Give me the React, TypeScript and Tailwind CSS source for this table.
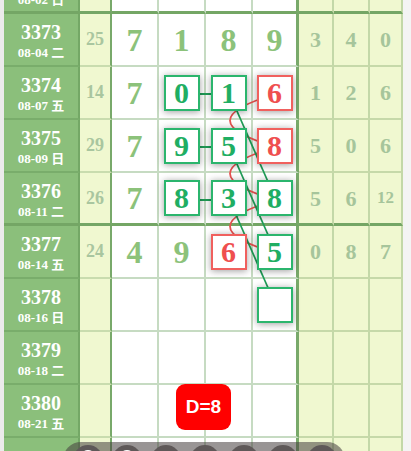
import React from 'react';

type Cell = { v: string; box?: 'g' | 'r' };
type Row = { id: string; date: string; n: string; main: Cell[]; tail: string[]; thick?: boolean };

const rows: Row[] = [
  { id: '3372', date: '08-02 日', n: '', main: [], tail: [], thick: true },
  { id: '3373', date: '08-04 二', n: '25', main: [{ v: '7' }, { v: '1' }, { v: '8' }, { v: '9' }], tail: ['3', '4', '0'] },
  { id: '3374', date: '08-07 五', n: '14', main: [{ v: '7' }, { v: '0', box: 'g' }, { v: '1', box: 'g' }, { v: '6', box: 'r' }], tail: ['1', '2', '6'] },
  { id: '3375', date: '08-09 日', n: '29', main: [{ v: '7' }, { v: '9', box: 'g' }, { v: '5', box: 'g' }, { v: '8', box: 'r' }], tail: ['5', '0', '6'] },
  { id: '3376', date: '08-11 二', n: '26', main: [{ v: '7' }, { v: '8', box: 'g' }, { v: '3', box: 'g' }, { v: '8', box: 'g' }], tail: ['5', '6', '12'], thick: true },
  { id: '3377', date: '08-14 五', n: '24', main: [{ v: '4' }, { v: '9' }, { v: '6', box: 'r' }, { v: '5', box: 'g' }], tail: ['0', '8', '7'] },
  { id: '3378', date: '08-16 日', n: '', main: [{ v: '' }, { v: '' }, { v: '' }, { v: '', box: 'g' }], tail: [] },
  { id: '3379', date: '08-18 二', n: '', main: [], tail: [] },
  { id: '3380', date: '08-21 五', n: '', main: [], tail: [] },
  { id: '', date: '', n: '', main: [], tail: [] },
];

const serif = "font-['Liberation_Serif','Noto_Sans_CJK_SC',serif]";

// column centres in page pixels
const cx = [135.5, 182.5, 229.5, 276];
const cy = (i: number) => 41 + 53 * (i - 1);

function NumBox({ cell }: { cell: Cell }) {
  if (!cell.box) {
    return <span className="text-[32px] font-bold leading-none text-[#8cc27a]">{cell.v}</span>;
  }
  const red = cell.box === 'r';
  return (
    <div
      className={`relative z-20 flex h-[36px] w-[36px] items-center justify-center border-2 bg-white text-[30px] font-bold leading-none shadow-[0_1px_7px_rgba(0,0,0,0.38)] ${
        red ? 'border-[#f0605e] text-[#ef4f4f]' : 'border-[#2bb56d] text-[#1fae63]'
      }`}
    >
      {cell.v}
    </div>
  );
}

export default function App() {
  const H = rows.length * 53;
  return (
    <div className={`relative h-[451px] w-[411px] overflow-hidden bg-[#ebebeb] ${serif}`}>
      <div className="absolute right-0 top-0 h-full w-[8px] bg-[#f4f4f4]" />
      <div className="ml-[4px] mt-[-39px] w-[399px]">
        <div className="relative">
          {rows.map((r, idx) => {
            const hb = r.thick ? 'border-b-[3px] border-b-[#74a665]' : 'border-b-2';
            return (
              <div key={idx} className="grid h-[53px] grid-cols-[76px_32px_47px_47px_47px_46px_35px_36px_33px]">
                <div className={`flex flex-col items-center justify-start border-r-2 border-r-[#74a866] bg-[#8bbf7b] pt-[7px] text-white ${hb} ${r.thick ? '' : 'border-b-[#79ad6b]'}`}>
                  <div className="text-[20px] font-bold leading-[22px]">{r.id}</div>
                  <div className="text-[13px] font-bold leading-[20px]">{r.date}</div>
                </div>
                <div className={`flex items-center justify-center border-r-2 border-r-[#78a96a] bg-[#f0f8d0] text-[18px] font-bold text-[#a9c69f] ${hb} ${r.thick ? '' : 'border-b-[#c9dcae]'}`}>
                  {r.n}
                </div>
                {[0, 1, 2, 3].map((k) => (
                  <div
                    key={k}
                    className={`flex items-center justify-center bg-white ${hb} ${r.thick ? '' : 'border-b-[#c6dbc2]'} ${
                      k === 3 ? 'border-r-[3px] border-r-[#78a96a]' : 'border-r-2 border-r-[#c6dbc2]'
                    }`}
                  >
                    {r.main[k] && <NumBox cell={r.main[k]} />}
                  </div>
                ))}
                {[0, 1, 2].map((k) => (
                  <div
                    key={k}
                    className={`flex items-center justify-center border-r-2 border-r-[#c3d8a8] bg-[#f0f8d0] font-bold text-[#a6c59b] ${hb} ${r.thick ? '' : 'border-b-[#c6d9a9]'} ${
                      r.tail[k] && r.tail[k].length > 1 ? 'text-[17px]' : 'text-[22px]'
                    }`}
                  >
                    {r.tail[k]}
                  </div>
                ))}
              </div>
            );
          })}

          {/* trend lines */}
          <svg
            className="pointer-events-none absolute left-0 top-0 z-10"
            width={399}
            height={H}
            viewBox={`4 -39 399 ${H}`}
          >
            <g stroke="#e8514f" strokeWidth={1.8} fill="none">
              {[2, 3, 4].map((i) => (
                <path key={i} d={`M ${cx[3]} ${cy(i)} Q 184 ${cy(i) + 26.5} ${cx[3]} ${cy(i + 1)}`} />
              ))}
            </g>
            <g stroke="#1f9d57" strokeWidth={1.8}>
              {[2, 3, 4].map((i) => (
                <line key={`h${i}`} x1={cx[1]} y1={cy(i)} x2={cx[2]} y2={cy(i)} />
              ))}
              {[2, 3, 4].map((i) => (
                <line key={`d${i}`} x1={cx[2]} y1={cy(i)} x2={cx[3]} y2={cy(i + 2)} />
              ))}
            </g>
          </svg>
        </div>
      </div>

      {/* D badge */}
      <div className="absolute left-[176px] top-[384px] flex h-[46px] w-[55px] items-center justify-center rounded-[9px] bg-[#ff0000] font-['Liberation_Sans',sans-serif] text-[19px] font-bold text-white">
        D=8
      </div>

      {/* bottom toolbar */}
      <div className="absolute left-[63px] top-[442px] flex h-[36px] w-[282px] items-center gap-[9px] rounded-full bg-[rgba(70,62,62,0.55)] pl-[10px]">
        {[0, 1, 2, 3, 4, 5, 6].map((i) => (
          <div key={i} className="flex h-[30px] w-[30px] items-start justify-center rounded-full bg-[#5e5858] pt-[5px]">
            {i < 2 && <div className="h-[16px] w-[16px] rounded-full border-2 border-white" />}
            {i === 6 && <div className="mt-[1px] h-[10px] w-[3px] rounded-sm bg-white" />}
          </div>
        ))}
      </div>
    </div>
  );
}
